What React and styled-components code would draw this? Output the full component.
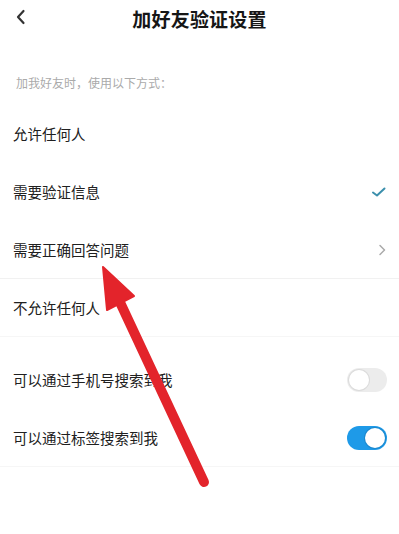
import React from 'react'
import styled, { createGlobalStyle } from 'styled-components'

const GlobalStyle = createGlobalStyle`
  html, body {
    margin: 0;
    padding: 0;
    background: #fff;
  }
  body {
    font-family: "Noto Sans CJK SC", "Noto Sans", sans-serif;
    color: #222;
  }
`

const SCPage = styled.div`
  position: relative;
  width: 399px;
  height: 534px;
  overflow: hidden;
  background: #fff;
`

const SCHeader = styled.div`
  height: 36px;
  display: flex;
  align-items: center;
  justify-content: center;
  position: relative;
`

const SCBack = styled.div`
  position: absolute;
  left: 14px;
  top: 8px;
  width: 14px;
  height: 18px;
  display: flex;
  align-items: center;
  justify-content: center;
`

const SCTitle = styled.h1`
  margin: 0;
  font-size: 19px;
  font-weight: 700;
  color: #161616;
  letter-spacing: 0.2px;
`

const SCHint = styled.div`
  padding: 38px 16px 12px;
  font-size: 12px;
  line-height: 18px;
  color: #aaa;
`

const SCGroup = styled.div`
  border-bottom: 1px solid #f6f6f6;
  margin-bottom: ${props => props.gap || 0}px;
`

const SCRow = styled.div`
  height: 58px;
  display: flex;
  align-items: center;
  justify-content: space-between;
  padding: 0 12px 0 13px;
  font-size: 14.5px;
  color: #202020;
  border-top: 1px solid ${props => props['data-line'] ? '#f1f1f1' : 'transparent'};
  box-sizing: border-box;
`

const SCToggle = styled.div`
  width: 40px;
  height: 24px;
  border-radius: 12px;
  box-sizing: border-box;
  background: ${props => props['data-on'] ? '#1e9ae8' : '#ececec'};
  display: flex;
  align-items: center;
  justify-content: ${props => props['data-on'] ? 'flex-end' : 'flex-start'};
  padding: 2px;
  &::after {
    content: '';
    width: 20px;
    height: 20px;
    border-radius: 50%;
    background: #fff;
    box-shadow: 0 0 0 1px ${props => props['data-on'] ? 'rgba(20, 110, 170, 0.4)' : 'rgba(0, 0, 0, 0.07)'};
  }
`

const SCOverlay = styled.svg`
  position: absolute;
  left: 0;
  top: 0;
  pointer-events: none;
`

const Check = () => (
  <svg width="16" height="12" viewBox="0 0 16 12">
    <path d="M2 6.5 L6 9.5 L13.5 2.5" fill="none" stroke="#3b8fac" strokeWidth="2" strokeLinecap="round" strokeLinejoin="round" />
  </svg>
)

const Chevron = () => (
  <svg width="10" height="14" viewBox="0 0 10 14">
    <path d="M3 2.5 L7.5 7 L3 11.5" fill="none" stroke="#aaa" strokeWidth="1.5" strokeLinecap="round" strokeLinejoin="round" />
  </svg>
)

const BackIcon = () => (
  <svg width="12" height="16" viewBox="0 0 12 16">
    <path d="M8.5 2 L3 8 L8.5 14" fill="none" stroke="#333" strokeWidth="2.2" strokeLinecap="round" strokeLinejoin="round" />
  </svg>
)

const App = () => (
  <SCPage>
    <GlobalStyle />
    <SCHeader>
      <SCBack><BackIcon /></SCBack>
      <SCTitle>加好友验证设置</SCTitle>
    </SCHeader>
    <SCHint>加我好友时，使用以下方式：</SCHint>
    <SCGroup gap={13}>
      <SCRow>允许任何人</SCRow>
      <SCRow>需要验证信息<Check /></SCRow>
      <SCRow>需要正确回答问题<Chevron /></SCRow>
      <SCRow data-line>不允许任何人</SCRow>
    </SCGroup>
    <SCGroup>
      <SCRow>可以通过手机号搜索到我<SCToggle /></SCRow>
      <SCRow>可以通过标签搜索到我<SCToggle data-on /></SCRow>
    </SCGroup>
    <SCOverlay width="399" height="534" viewBox="0 0 399 534">
      <line x1="118" y1="298" x2="204" y2="482" stroke="#e3242b" strokeWidth="10" strokeLinecap="round" />
      <polygon points="103,267 134,296 107,310" fill="#e3242b" stroke="#e3242b" strokeWidth="2" strokeLinejoin="round" />
    </SCOverlay>
  </SCPage>
)

export default App
